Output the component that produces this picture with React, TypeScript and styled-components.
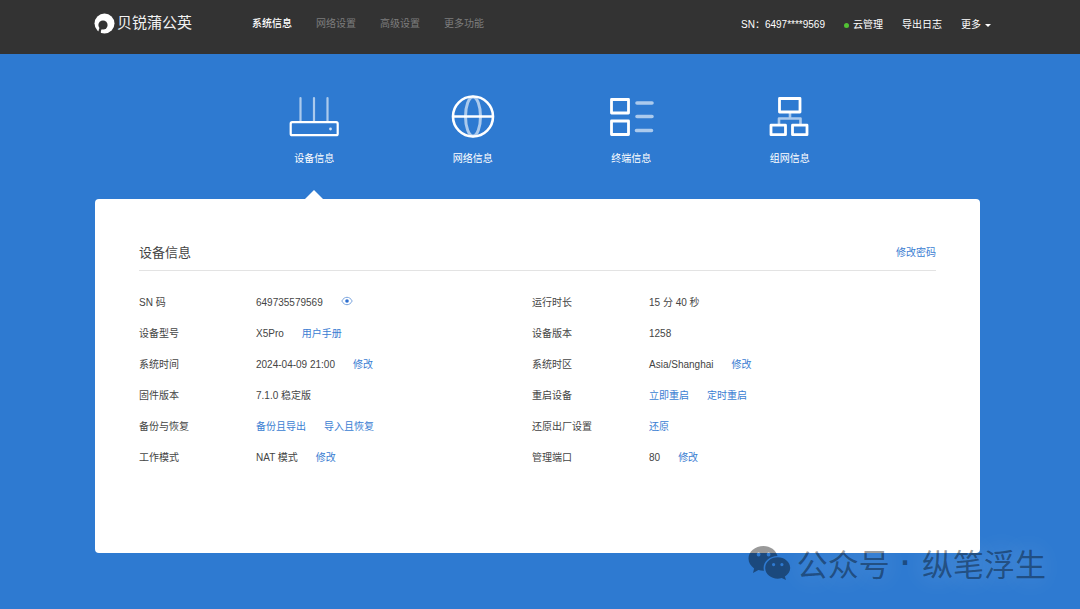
import React from 'react';
import styled, { createGlobalStyle } from 'styled-components';

const GlobalStyle = createGlobalStyle`
  * { box-sizing: border-box; }
  body {
    margin: 0;
    background: #2e7ad1;
    color: #444;
    font-family: "Liberation Sans", "Noto Sans CJK SC", sans-serif;
    font-size: 10px;
    line-height: 16px;
  }
  button { font: inherit; color: inherit; background: none; border: 0; padding: 0; cursor: pointer; }
  a { text-decoration: none; }
`;

const Page = styled.div`
  position: relative;
  min-height: 100vh;
  padding-bottom: 56px;
`;

const Header = styled.header`
  display: flex;
  align-items: flex-start;
  height: 54px;
  padding: 12px 89px 0 94px;
  background: #333;
  color: #fff;
`;

const Logo = styled.a`
  display: flex;
  align-items: center;
  gap: 2px;
  width: 157px;
  height: 22px;
  color: #f2f2f2;
  font-size: 15px;
  white-space: nowrap;
`;

const Nav = styled.nav`
  display: flex;
  flex: 1;
  gap: 22px;
  padding-top: 4px;
`;

const NavLink = styled.a<{ $active?: boolean }>`
  width: 42px;
  text-align: center;
  white-space: nowrap;
  font-weight: ${p => (p.$active ? 500 : 400)};
  color: ${p => (p.$active ? '#fff' : '#7d7d7d')};
`;

const Tools = styled.div`
  display: flex;
  gap: 19px;
  padding-top: 5px;
  white-space: nowrap;
`;

const Tool = styled.button`
  display: flex;
  align-items: center;
  gap: 4px;
`;

const Dot = styled.i`
  width: 5px;
  height: 5px;
  border-radius: 50%;
  background: #52c234;
`;

const Caret = styled.i`
  border: 3px solid transparent;
  border-top-color: #fff;
  border-bottom: 0;
`;

const Main = styled.main`
  padding: 0 100px 0 95px;
`;

const Tabs = styled.nav`
  display: grid;
  grid-template-columns: repeat(4, 1fr);
  height: 145px;
  padding: 41px 111px 0 140px;
`;

const Tab = styled.a<{ $active?: boolean }>`
  position: relative;
  display: flex;
  flex-direction: column;
  align-items: center;
  gap: 12px;
  color: #fff;

  &::after {
    content: '';
    display: ${p => (p.$active ? 'block' : 'none')};
    position: absolute;
    bottom: 0;
    border: 9px solid transparent;
    border-top: 0;
    border-bottom-color: #fff;
  }
`;

const Panel = styled.section`
  min-height: 354px;
  padding: 42px 44px 44px;
  border-radius: 4px;
  background: #fff;
`;

const PanelHeader = styled.div`
  display: flex;
  align-items: center;
  justify-content: space-between;
  height: 30px;
  padding-bottom: 5px;
  border-bottom: 1px solid #e3e3e3;
`;

const Title = styled.h1`
  margin: 0;
  font-size: 13px;
  font-weight: 400;
`;

const Action = styled.a`
  display: flex;
  color: #3a7dd2;
`;

const Columns = styled.div`
  display: grid;
  grid-template-columns: 393fr 404fr;
  padding-top: 16px;
`;

const List = styled.dl`
  margin: 0;
`;

const Row = styled.div`
  display: flex;
  align-items: center;
  height: 31px;
`;

const Term = styled.dt`
  width: 117px;
`;

const Detail = styled.dd`
  display: flex;
  align-items: center;
  gap: 18px;
  margin: 0;
`;

const IconButton = styled.button`
  display: flex;
  padding-bottom: 4px;
`;

const Watermark = styled.div`
  position: absolute;
  right: 34px;
  bottom: 22px;
  display: flex;
  align-items: center;
  gap: 11px;
  color: rgba(0, 0, 0, 0.4);
  font-family: "Noto Sans CJK SC", sans-serif;
  font-size: 31px;
  line-height: 48px;
  white-space: nowrap;
  text-shadow: 0 0 24px rgba(255, 255, 255, 0.25);
`;

const WatermarkName = styled.span`
  display: flex;
  align-items: center;
  gap: 6px;
`;

const Separator = styled.span`
  font-family: "Liberation Sans", sans-serif;
  font-weight: 700;
`;

function LogoMark() {
  return (
    <svg width="21" height="21" viewBox="0 0 21 21" aria-hidden="true">
      <circle cx="10.500" cy="10.500" r="10" fill="#fff" />
      <circle cx="9" cy="12" r="4.600" fill="#333" />
      <path d="M7 14.500C6 16 5.600 18 5.500 21" fill="none" stroke="#333" strokeWidth="2.400" />
    </svg>
  );
}

function WechatIcon() {
  return (
    <svg width="43" height="36" viewBox="0 0 43 36" fill="currentColor" fillRule="evenodd" aria-hidden="true">
      <path d="M15.500 1C7 1 .5 6.600.5 13.600c0 4 2.100 7.400 5.600 9.800L5 28l5.400-2.900c1.800.5 3.700.8 5.600.7A11.800 11.800 0 0 1 15.600 23c0-6.700 6.300-11.700 13.900-11.900C28 5.300 22.400 1 15.500 1zM10.600 7.600a1.900 1.900 0 1 1 0 3.800 1.900 1.900 0 0 1 0-3.800zM20.600 7.600a1.900 1.900 0 1 1 0 3.800 1.900 1.900 0 0 1 0-3.800z" />
      <path d="M29.700 12.300c-7 0-12.500 4.800-12.500 10.700s5.500 10.700 12.500 10.700c1.400 0 2.700-.2 4-.6l4.300 2-1.100-3.600c3.200-2 5.300-5 5.300-8.500 0-5.900-5.600-10.700-12.500-10.700zM25.600 18a1.600 1.600 0 1 1 0 3.200 1.600 1.600 0 0 1 0-3.200zM33.900 18a1.600 1.600 0 1 1 0 3.200 1.600 1.600 0 0 1 0-3.200z" />
    </svg>
  );
}

function RouterIcon() {
  return (
    <svg width="50" height="44" viewBox="0 0 50 44" fill="none" stroke="#fff" aria-hidden="true">
      <path d="M11.500 3v23M25 3v23M38.500 3v23" strokeWidth="2.200" strokeLinecap="round" opacity=".6" />
      <rect x="1.700" y="27.200" width="47" height="13" rx="1.500" strokeWidth="2.200" />
      <circle cx="41.500" cy="34" r="1.400" fill="#fff" stroke="none" opacity=".8" />
    </svg>
  );
}

function GlobeIcon() {
  return (
    <svg width="50" height="44" viewBox="0 0 50 44" fill="none" stroke="#fff" aria-hidden="true">
      <ellipse cx="25" cy="21.500" rx="7.500" ry="19.500" strokeWidth="3" opacity=".6" />
      <circle cx="25" cy="21.500" r="20" strokeWidth="2.600" />
      <path d="M5 21.500h40" strokeWidth="2.600" />
    </svg>
  );
}

function DevicesIcon() {
  return (
    <svg width="50" height="44" viewBox="0 0 50 44" fill="none" stroke="#fff" aria-hidden="true">
      <rect x="5.500" y="4.500" width="17" height="13.500" strokeWidth="2.800" strokeLinejoin="round" />
      <rect x="5.500" y="26" width="17" height="13.500" strokeWidth="2.800" strokeLinejoin="round" />
      <path d="M31 8h15M31 21.500h15M30.500 35.500h15" strokeWidth="3.600" strokeLinecap="round" opacity=".6" />
    </svg>
  );
}

function TopologyIcon() {
  return (
    <svg width="50" height="44" viewBox="0 0 50 44" fill="none" stroke="#fff" strokeLinejoin="round" aria-hidden="true">
      <path d="M25 18v6M14 30v-6.500h21.500v6.500" strokeWidth="2.600" opacity=".6" />
      <rect x="14.500" y="3.500" width="20.500" height="13.500" strokeWidth="2.800" />
      <rect x="6" y="30.200" width="14.500" height="9.500" strokeWidth="2.800" />
      <rect x="27.500" y="30.200" width="14.500" height="9.500" strokeWidth="2.800" />
    </svg>
  );
}

function EyeIcon() {
  return (
    <svg width="12" height="10" viewBox="0 0 12 10" fill="none" aria-hidden="true">
      <path d="M.8 5C2.200 2.400 4 1.300 6 1.300S9.800 2.400 11.200 5C9.800 7.600 8 8.700 6 8.700S2.200 7.600.8 5z" stroke="#7ba5de" />
      <circle cx="6" cy="5" r="1.800" fill="#2e6fd0" />
    </svg>
  );
}

type Item = { label: string; value?: string; actions?: string[]; eye?: boolean };

const left: Item[] = [
  { label: 'SN 码', value: '649735579569', eye: true },
  { label: '设备型号', value: 'X5Pro', actions: ['用户手册'] },
  { label: '系统时间', value: '2024-04-09 21:00', actions: ['修改'] },
  { label: '固件版本', value: '7.1.0 稳定版' },
  { label: '备份与恢复', actions: ['备份且导出', '导入且恢复'] },
  { label: '工作模式', value: 'NAT 模式', actions: ['修改'] },
];

const right: Item[] = [
  { label: '运行时长', value: '15 分 40 秒' },
  { label: '设备版本', value: '1258' },
  { label: '系统时区', value: 'Asia/Shanghai', actions: ['修改'] },
  { label: '重启设备', actions: ['立即重启', '定时重启'] },
  { label: '还原出厂设置', actions: ['还原'] },
  { label: '管理端口', value: '80', actions: ['修改'] },
];

const tabs = [
  { label: '设备信息', Icon: RouterIcon },
  { label: '网络信息', Icon: GlobeIcon },
  { label: '终端信息', Icon: DevicesIcon },
  { label: '组网信息', Icon: TopologyIcon },
];

function InfoList({ items }: { items: Item[] }) {
  return (
    <List>
      {items.map(item => (
        <Row key={item.label}>
          <Term>{item.label}</Term>
          <Detail>
            {item.value && <span>{item.value}</span>}
            {item.eye && (
              <IconButton type="button" aria-label="显示或隐藏 SN 码">
                <EyeIcon />
              </IconButton>
            )}
            {item.actions?.map(action => (
              <Action key={action} href="#">{action}</Action>
            ))}
          </Detail>
        </Row>
      ))}
    </List>
  );
}

export default function App() {
  return (
    <Page>
      <GlobalStyle />
      <Header>
        <Logo href="#">
          <LogoMark />
          贝锐蒲公英
        </Logo>
        <Nav>
          {['系统信息', '网络设置', '高级设置', '更多功能'].map((label, i) => (
            <NavLink key={label} href="#" $active={i === 0}>{label}</NavLink>
          ))}
        </Nav>
        <Tools>
          <span>SN：6497****9569</span>
          <Tool type="button"><Dot />云管理</Tool>
          <Tool type="button">导出日志</Tool>
          <Tool type="button">更多<Caret /></Tool>
        </Tools>
      </Header>
      <Main>
        <Tabs>
          {tabs.map(({ label, Icon }, i) => (
            <Tab key={label} href="#" $active={i === 0}>
              <Icon />
              {label}
            </Tab>
          ))}
        </Tabs>
        <Panel>
          <PanelHeader>
            <Title>设备信息</Title>
            <Action href="#">修改密码</Action>
          </PanelHeader>
          <Columns>
            <InfoList items={left} />
            <InfoList items={right} />
          </Columns>
        </Panel>
      </Main>
      <Watermark>
        <WatermarkName>
          <WechatIcon />
          公众号
        </WatermarkName>
        <Separator>·</Separator>
        <span>纵笔浮生</span>
      </Watermark>
    </Page>
  );
}
